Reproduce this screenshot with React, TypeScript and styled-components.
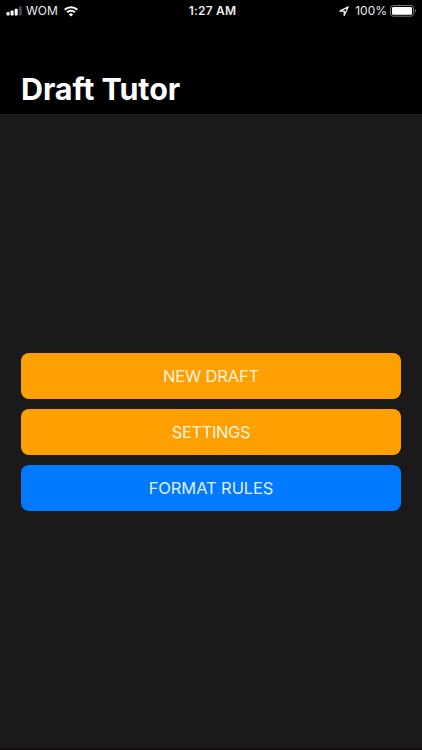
import React from 'react';
import styled, { createGlobalStyle } from 'styled-components';

const GlobalStyle = createGlobalStyle`
  *, *::before, *::after { box-sizing: border-box; }
  body { margin: 0; background: #1a1a1a; }
`;

const Screen = styled.div`
  display: flex;
  flex-direction: column;
  height: 100vh;
  background: #1a1a1a;
  border-bottom: 2px solid #130f12;
  color: #fff;
  font-family: Inter, 'Liberation Sans', sans-serif;
`;

const Header = styled.header`
  display: flex;
  flex-direction: column;
  justify-content: space-between;
  flex: none;
  height: 115px;
  background: #000;
  border-bottom: 1px solid #242424;
`;

const StatusBar = styled.div`
  display: grid;
  grid-template-columns: 1fr auto 1fr;
  align-items: center;
  height: 22px;
  padding: 0 5px 0 6px;
`;

const StatusGroup = styled.div<{ $end?: boolean }>`
  display: flex;
  align-items: center;
  justify-content: ${({ $end }) => ($end ? 'flex-end' : 'flex-start')};
`;

const StatusText = styled.span<{ $weight?: number; $spacing?: number; $gap?: number }>`
  margin-right: ${({ $gap = 0 }) => $gap}px;
  font-size: 12px;
  line-height: 22px;
  font-weight: ${({ $weight = 400 }) => $weight};
  letter-spacing: ${({ $spacing = 0 }) => $spacing}px;
  color: #ececec;
  white-space: nowrap;
`;

const Clock = styled(StatusText)`
  padding-left: 2px;
`;

const Glyph = styled.svg<{ $gap?: number }>`
  flex: none;
  display: block;
  margin-right: ${({ $gap = 0 }) => $gap}px;
`;

const Title = styled.h1`
  margin: 0;
  padding: 0 21px 6px;
  font-size: 30.5px;
  line-height: 38px;
  font-weight: 680;
  letter-spacing: -0.1px;
`;

const Menu = styled.main`
  display: flex;
  flex: 1;
  flex-direction: column;
  gap: 10px;
  padding: 238px 21px 0;
`;

const MenuButton = styled.button<{ $color: string; $spacing: number }>`
  height: 46px;
  flex: none;
  padding: 0;
  border: 0;
  border-radius: 8px;
  background: ${({ $color }) => $color};
  color: rgba(255, 255, 255, 0.9);
  font-family: inherit;
  font-size: 16.5px;
  line-height: 46px;
  font-weight: 400;
  letter-spacing: ${({ $spacing }) => $spacing}px;
`;

const SignalIcon = () => (
  <Glyph width="16" height="10" viewBox="0 0 16 10" $gap={4}>
    <rect x="0.5" y="6" width="3" height="3.5" rx="0.7" fill="#fff" />
    <rect x="4.6" y="4.6" width="3" height="4.9" rx="0.7" fill="#fff" />
    <rect x="8.7" y="2.8" width="3" height="6.7" rx="0.7" fill="#fff" />
    <rect x="12.8" y="0.5" width="3" height="9" rx="0.7" fill="#484848" />
  </Glyph>
);

const WifiIcon = () => (
  <Glyph width="14" height="11" viewBox="0 0 14 11">
    <g fill="none" stroke="#fff" strokeWidth="2.1">
      <path d="M0.7 3.8a8.9 8.9 0 0 1 12.6 0" />
      <path d="M3.1 6.3a5.5 5.5 0 0 1 7.8 0" />
    </g>
    <path d="M4.9 8.4a3 3 0 0 1 4.2 0L7 10.6z" fill="#fff" />
  </Glyph>
);

const LocationIcon = () => (
  <Glyph width="10" height="10" viewBox="0 0 10 10" $gap={6}>
    <path d="M0.8 5.1 9.2 0.8 5.2 9.4V5.1z" fill="none" stroke="#eee" strokeWidth="1.3" strokeLinejoin="round" />
  </Glyph>
);

const BatteryIcon = () => (
  <Glyph width="27" height="12" viewBox="0 0 27 12">
    <rect x="0.5" y="0.5" width="23" height="10.7" rx="2.6" fill="none" stroke="#777" />
    <rect x="2" y="2" width="20" height="7.7" rx="1.2" fill="#fff" />
    <path d="M24.8 4c1.6.6 1.6 3.2 0 3.8z" fill="#777" />
  </Glyph>
);

const actions = [
  { label: 'NEW DRAFT', color: '#ff9f00', spacing: -0.15 },
  { label: 'SETTINGS', color: '#ff9f00', spacing: -0.4 },
  { label: 'FORMAT RULES', color: '#007aff', spacing: -0.1 },
];

export default function App() {
  return (
    <>
      <GlobalStyle />
      <Screen>
        <Header>
          <StatusBar>
            <StatusGroup>
              <SignalIcon />
              <StatusText $gap={6}>WOM</StatusText>
              <WifiIcon />
            </StatusGroup>
            <Clock $weight={600} $spacing={0.2}>1:27 AM</Clock>
            <StatusGroup $end>
              <LocationIcon />
              <StatusText $gap={3}>100%</StatusText>
              <BatteryIcon />
            </StatusGroup>
          </StatusBar>
          <Title>Draft Tutor</Title>
        </Header>
        <Menu>
          {actions.map(({ label, color, spacing }) => (
            <MenuButton key={label} $color={color} $spacing={spacing}>
              {label}
            </MenuButton>
          ))}
        </Menu>
      </Screen>
    </>
  );
}
